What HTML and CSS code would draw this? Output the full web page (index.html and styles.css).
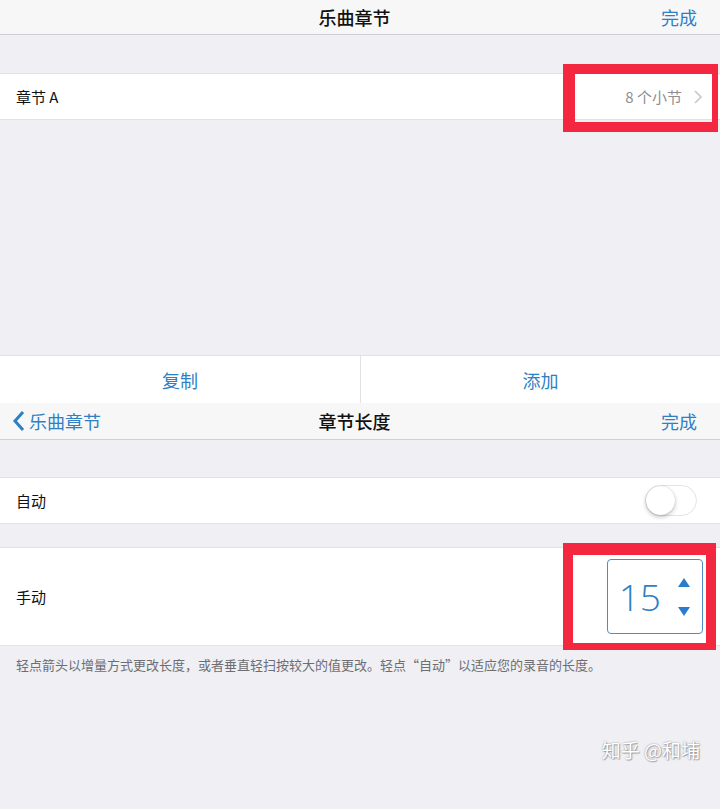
FILE: index.html
```html
<!DOCTYPE html>
<html lang="zh-CN">
<head>
  <meta charset="UTF-8">
  <meta name="viewport" content="width=device-width, initial-scale=1.0">
  <title>乐曲章节</title>
  <link rel="stylesheet" href="styles.css">
</head>
<body>
  <div class="page">
    <div class="navbar">
      <span class="nav-left"></span>
      <span class="nav-title">乐曲章节</span>
      <a class="nav-done" href="#">完成</a>
    </div>

    <div class="list first">
      <div class="row">
        <span class="label">章节 A</span>
        <span class="detail">8 个小节
          <svg class="chevron" width="10" height="16" viewBox="0 0 10 16"><polyline points="2,2 8,8 2,14" fill="none" stroke="#c7c7cc" stroke-width="1.6"/></svg>
        </span>
      </div>
    </div>

    <div class="spacer"></div>

    <div class="actions">
      <a href="#">复制</a>
      <a href="#">添加</a>
    </div>

    <div class="navbar second">
      <a class="nav-back" href="#">
        <svg width="14" height="22" viewBox="0 0 14 22"><polyline points="11,2 3,11 11,20" fill="none" stroke="#2e7fc4" stroke-width="3"/></svg>
        乐曲章节
      </a>
      <span class="nav-title">章节长度</span>
      <a class="nav-done" href="#">完成</a>
    </div>

    <div class="list auto">
      <div class="row">
        <span class="label">自动</span>
        <span class="toggle"><span class="knob"></span></span>
      </div>
    </div>

    <div class="list manual">
      <div class="row tall">
        <span class="label">手动</span>
        <div class="stepper">
          <span class="value">15</span>
          <span class="arrows">
            <span class="up"></span>
            <span class="down"></span>
          </span>
        </div>
      </div>
    </div>

    <p class="footnote">轻点箭头以增量方式更改长度，或者垂直轻扫按较大的值更改。轻点“自动”以适应您的录音的长度。</p>

    <div class="mark mark-top"></div>
    <div class="mark mark-bottom"></div>
    <div class="watermark">知乎 @和埔</div>
  </div>
</body>
</html>
```

FILE: styles.css
```css
body {
  margin: 0;
  padding: 0;
  background-color: #efeff4;
  font-family: "Noto Sans CJK SC", "Liberation Sans", sans-serif;
  color: #111;
}

a {
  text-decoration: none;
}

.page {
  position: relative;
  width: 720px;
  height: 809px;
  overflow: hidden;
  display: flex;
  flex-direction: column;
}

.navbar {
  height: 34px;
  background-color: #f7f7f8;
  border-bottom: 1px solid #cfcfd3;
  display: grid;
  grid-template-columns: 1fr auto 1fr;
  align-items: center;
  padding: 0 23px 0 12px;
}

.navbar.second {
  height: 36px;
}

.nav-title {
  font-size: 18px;
  font-weight: 500;
  color: #111;
}

.nav-done {
  justify-self: end;
  font-size: 18px;
  color: #2e7fc4;
}

.nav-back {
  display: flex;
  align-items: center;
  gap: 3px;
  font-size: 18px;
  color: #2e7fc4;
}

.list {
  background-color: #fff;
  border-top: 1px solid #e2e2e6;
  border-bottom: 1px solid #e2e2e6;
}

.list.first {
  margin-top: 38px;
}

.list.auto {
  margin-top: 37px;
}

.list.manual {
  margin-top: 23px;
}

.row {
  height: 45px;
  display: flex;
  align-items: center;
  justify-content: space-between;
  padding: 0 17px 0 16px;
}

.list.auto .row {
  padding-right: 23px;
}

.row.tall {
  height: 97px;
}

.label {
  font-size: 15px;
}

.detail {
  display: flex;
  align-items: center;
  gap: 11px;
  font-size: 15px;
  color: #8e8e93;
}

.spacer {
  flex: 0 0 235px;
}

.actions {
  height: 47px;
  background-color: #fff;
  border-top: 1px solid #e2e2e6;
  display: grid;
  grid-template-columns: 1fr 1fr;
}

.actions a {
  display: flex;
  align-items: center;
  justify-content: center;
  font-size: 18px;
  color: #2e7fc4;
}

.actions a + a {
  border-left: 1px solid #e2e2e6;
}

.toggle {
  width: 50px;
  height: 29px;
  border: 1px solid #e3e3e6;
  border-radius: 16px;
  background-color: #fff;
  display: flex;
  align-items: center;
}

.knob {
  width: 29px;
  height: 29px;
  border-radius: 50%;
  background-color: #fff;
  box-shadow: 0 2px 4px rgba(0, 0, 0, 0.25), 0 0 1px rgba(0, 0, 0, 0.2);
}

.stepper {
  width: 96px;
  height: 75px;
  border: 1px solid #4f8cc4;
  border-radius: 4px;
  display: flex;
  align-items: center;
  justify-content: flex-end;
  gap: 17px;
  padding-right: 12px;
  box-sizing: border-box;
}

.value {
  font-family: "Open Sans", "Liberation Sans", sans-serif;
  font-size: 37px;
  font-weight: 300;
  color: #2e7fc4;
}

.arrows {
  display: flex;
  flex-direction: column;
  gap: 20px;
}

.up, .down {
  width: 0;
  height: 0;
  border-left: 6px solid transparent;
  border-right: 6px solid transparent;
}

.up {
  border-bottom: 9px solid #2a7ccc;
}

.down {
  border-top: 9px solid #2a7ccc;
}

.footnote {
  margin: 9px 16px 0;
  font-size: 13px;
  color: #6d6d72;
}

/* riquadri rossi di evidenziazione */
.mark {
  position: absolute;
  border-style: solid;
  border-color: #f3273f;
  box-sizing: border-box;
}

.mark-top {
  left: 563px;
  top: 64px;
  width: 155px;
  height: 68px;
  border-width: 10px 6px 10px 12px;
}

.mark-bottom {
  left: 563px;
  top: 543px;
  width: 153px;
  height: 107px;
  border-width: 12px 10px 7px 10px;
}

.watermark {
  position: absolute;
  right: 20px;
  bottom: 46px;
  font-size: 19px;
  color: #fff;
  text-shadow: 0 0 2px rgba(0, 0, 0, 0.4), 1px 1px 1px rgba(0, 0, 0, 0.25);
}
```
